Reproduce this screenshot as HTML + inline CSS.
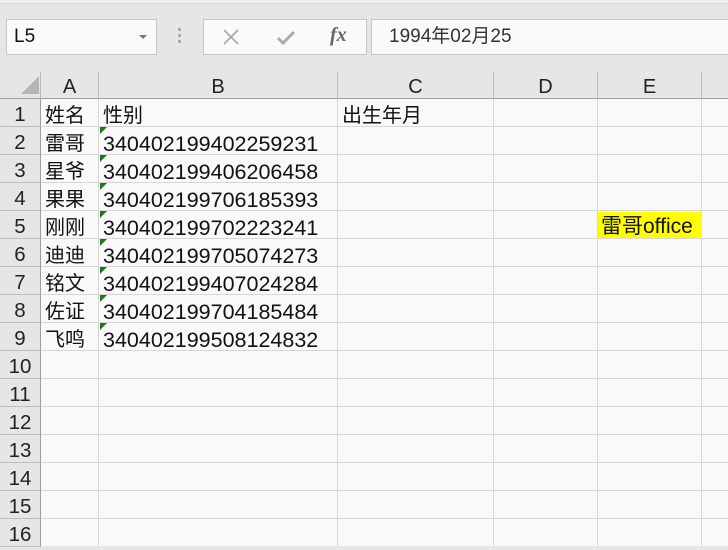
<!DOCTYPE html>
<html><head><meta charset="utf-8"><style>
*{margin:0;padding:0;box-sizing:border-box}
body{width:728px;height:546px;overflow:hidden;background:#e6e6e6;font-family:"Liberation Sans","Noto Sans CJK SC",sans-serif;position:relative;color:#111}
.a{position:absolute}
.box{background:#fafafa;border:1px solid #c6c6c6}
.grid{left:0;top:72px;width:728px;height:474px;background:#f9f9f9}
.ch{top:72px;height:27px;background:#e6e6e6;border-right:1px solid #bdbdbd;border-bottom:1px solid #9e9e9e;font-size:20px;text-align:center;line-height:30px;color:#222}
.rh{left:0;width:41px;height:28px;background:#e6e6e6;border-right:1px solid #9e9e9e;border-bottom:1px solid #bdbdbd;font-size:20.5px;text-align:center;line-height:31px;color:#222}
.vl{top:99px;width:1px;height:447px;background:#d6d6d6}
.hl{left:41px;width:687px;height:1px;background:#d6d6d6}
.t{font-size:20px;line-height:28px;height:28px;white-space:nowrap;margin-top:2px}
.n{font-size:21.5px}
.g{width:0;height:0;border-top:7px solid #1a7a1a;border-right:7px solid transparent}
</style></head><body>
<div class="a" style="left:0;top:0;width:728px;height:4px;background:#f0f0f0;border-bottom:1px solid #d8d8d8"></div>
<div class="a box" style="left:6px;top:19px;width:151px;height:36px;font-size:19px;line-height:34px;padding-left:7px">L5</div>
<div class="a" style="left:139px;top:35px;border-top:4px solid #777;border-left:4px solid transparent;border-right:4px solid transparent"></div>
<div class="a" style="left:178px;top:28px;width:3px;height:3px;background:#aaa;box-shadow:0 6px 0 #aaa,0 12px 0 #aaa"></div>
<div class="a box" style="left:203px;top:19px;width:164px;height:36px"></div>
<svg class="a" style="left:222px;top:28px" width="18" height="18"><path d="M2 2L16 16M16 2L2 16" stroke="#aaa" stroke-width="1.8"/></svg>
<svg class="a" style="left:276px;top:30px" width="20" height="16"><path d="M2 8L7 13L18 2" stroke="#aaa" stroke-width="3" fill="none"/></svg>
<div class="a" style="left:330px;top:24px;font-family:'Liberation Serif',serif;font-style:italic;font-weight:bold;font-size:20px;color:#666">fx</div>
<div class="a box" style="left:371px;top:19px;width:360px;height:36px;font-size:19px;line-height:34px;padding-left:17px;color:#333">1994年02月25</div>

<div class="a grid"></div>
<div class="a" style="left:0;top:72px;width:41px;height:27px;background:#e6e6e6;border-right:1px solid #bdbdbd;border-bottom:1px solid #9e9e9e"></div>
<div class="a" style="left:21px;top:76px;border-bottom:18px solid #b5b5b5;border-left:18px solid transparent"></div>
<div class="a ch" style="left:41px;width:58px">A</div>
<div class="a ch" style="left:99px;width:239px">B</div>
<div class="a ch" style="left:338px;width:156px">C</div>
<div class="a ch" style="left:494px;width:104px">D</div>
<div class="a ch" style="left:598px;width:104px">E</div>
<div class="a ch" style="left:702px;width:30px"></div>

<div class="a rh" style="top:99px">1</div><div class="a rh" style="top:127px">2</div><div class="a rh" style="top:155px">3</div><div class="a rh" style="top:183px">4</div><div class="a rh" style="top:211px">5</div><div class="a rh" style="top:239px">6</div><div class="a rh" style="top:267px">7</div><div class="a rh" style="top:295px">8</div><div class="a rh" style="top:323px">9</div><div class="a rh" style="top:351px">10</div><div class="a rh" style="top:379px">11</div><div class="a rh" style="top:407px">12</div><div class="a rh" style="top:435px">13</div><div class="a rh" style="top:463px">14</div><div class="a rh" style="top:491px">15</div><div class="a rh" style="top:519px">16</div>

<div class="a vl" style="left:98px"></div><div class="a vl" style="left:337px"></div><div class="a vl" style="left:493px"></div><div class="a vl" style="left:597px"></div><div class="a vl" style="left:701px"></div>
<div class="a hl" style="top:126px"></div><div class="a hl" style="top:154px"></div><div class="a hl" style="top:182px"></div><div class="a hl" style="top:210px"></div><div class="a hl" style="top:238px"></div><div class="a hl" style="top:266px"></div><div class="a hl" style="top:294px"></div><div class="a hl" style="top:322px"></div><div class="a hl" style="top:350px"></div><div class="a hl" style="top:378px"></div><div class="a hl" style="top:406px"></div><div class="a hl" style="top:434px"></div><div class="a hl" style="top:462px"></div><div class="a hl" style="top:490px"></div><div class="a hl" style="top:518px"></div>

<div class="a t" style="left:45px;top:100px">姓名</div>
<div class="a t" style="left:103px;top:100px">性别</div>
<div class="a t" style="left:342px;top:100px">出生年月</div>

<div class="a t" style="left:45px;top:128px">雷哥</div>
<div class="a t" style="left:45px;top:156px">星爷</div>
<div class="a t" style="left:45px;top:184px">果果</div>
<div class="a t" style="left:45px;top:212px">刚刚</div>
<div class="a t" style="left:45px;top:240px">迪迪</div>
<div class="a t" style="left:45px;top:268px">铭文</div>
<div class="a t" style="left:45px;top:296px">佐证</div>
<div class="a t" style="left:45px;top:324px">飞鸣</div>

<div class="a t n" style="left:103px;top:128px">340402199402259231</div>
<div class="a t n" style="left:103px;top:156px">340402199406206458</div>
<div class="a t n" style="left:103px;top:184px">340402199706185393</div>
<div class="a t n" style="left:103px;top:212px">340402199702223241</div>
<div class="a t n" style="left:103px;top:240px">340402199705074273</div>
<div class="a t n" style="left:103px;top:268px">340402199407024284</div>
<div class="a t n" style="left:103px;top:296px">340402199704185484</div>
<div class="a t n" style="left:103px;top:324px">340402199508124832</div>

<div class="a g" style="left:100px;top:127px"></div><div class="a g" style="left:100px;top:155px"></div><div class="a g" style="left:100px;top:183px"></div><div class="a g" style="left:100px;top:211px"></div><div class="a g" style="left:100px;top:239px"></div><div class="a g" style="left:100px;top:267px"></div><div class="a g" style="left:100px;top:295px"></div><div class="a g" style="left:100px;top:323px"></div>

<div class="a" style="left:598px;top:212px;width:104px;height:26px;background:#ffff00;padding-left:3px;line-height:29px;font-size:21px;white-space:nowrap">雷哥office</div>
</body></html>
